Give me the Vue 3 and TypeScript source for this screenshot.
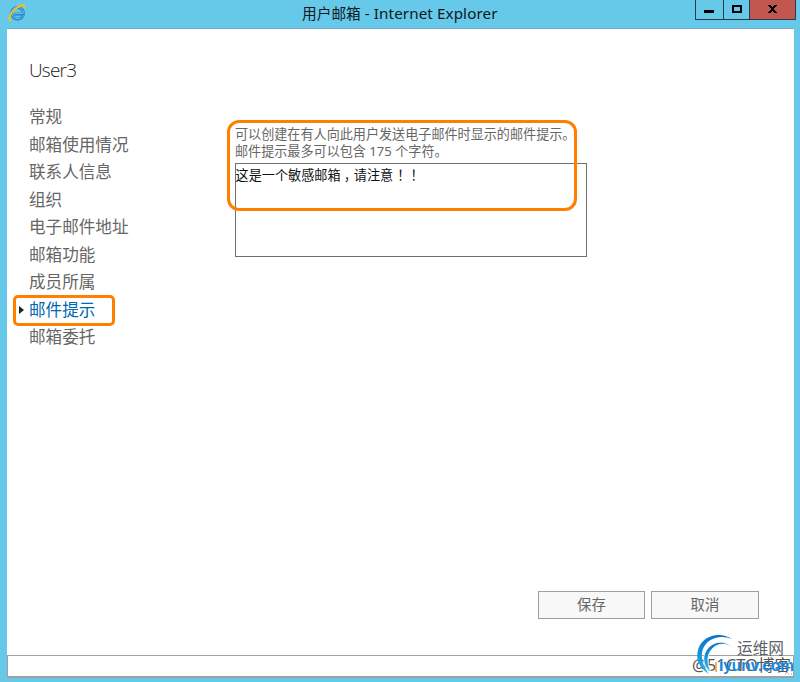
<script setup lang="ts">
interface Section {
  label: string
  active?: boolean
}

const sections: Section[] = [
  { label: '常规' },
  { label: '邮箱使用情况' },
  { label: '联系人信息' },
  { label: '组织' },
  { label: '电子邮件地址' },
  { label: '邮箱功能' },
  { label: '成员所属' },
  { label: '邮件提示', active: true },
  { label: '邮箱委托' },
]
</script>

<template>
  <div class="window">
    <header class="titlebar">
      <svg class="ie" viewBox="0 0 18 18" width="18" height="18">
        <path d="M14.6 12.1A5.8 5.8 0 1 1 15.3 8.7V10H5.9" fill="none" stroke="#2385cc" stroke-width="3" />
        <path d="M14.3 12A5.8 5.8 0 1 1 15.2 9.4H6" fill="none" stroke="#72c4ef" stroke-width="1" />
        <path d="M3.2 16.3C-.8 17.4 1.5 10 7 5.2C11.9.8 17.8-.5 15.9 4.2" fill="none" stroke="#efc21a" stroke-width="2" />
      </svg>
      <h1 class="title">用户邮箱<span class="app"> - Internet Explorer</span></h1>
      <div class="controls">
        <span class="control"><i class="minimize"></i></span>
        <span class="control"><i class="maximize"></i></span>
        <span class="control close">
          <svg viewBox="0 0 9 8" width="9" height="8" shape-rendering="crispEdges">
            <path d="M0 0h3v1h1v1h1V1h1V0h3v1H8v1H7v1H6v2h1v1h1v1h1v1H6V7H5V6H4v1H3v1H0V7h1V6h1V5h1V3H2V2H1V1H0z" />
          </svg>
        </span>
      </div>
    </header>
    <main class="page">
      <h2 class="user">User3</h2>
      <div class="content">
        <nav class="nav">
          <a v-for="section in sections" :key="section.label" class="item" :class="{ active: section.active }">
            {{ section.label }}
          </a>
        </nav>
        <section class="tip">
          <p class="hint">可以创建在有人向此用户发送电子邮件时显示的邮件提示。<br />邮件提示最多可以包含 175 个字符。</p>
          <div class="field">这是一个敏感邮箱<span class="comma">，</span>请注意<span class="bang">！！</span></div>
          <div class="outline"></div>
        </section>
      </div>
      <footer class="actions">
        <button class="button save">保存</button>
        <button class="button">取消</button>
      </footer>
    </main>
    <div class="statusbar"></div>
    <svg class="watermark" viewBox="690 630 110 52" width="110" height="52">
      <defs>
        <linearGradient id="arc" x1="0" y1="0" x2="0" y2="1">
          <stop offset="0" stop-color="#0872c7" />
          <stop offset="1" stop-color="#20b5f1" />
        </linearGradient>
      </defs>
      <text class="blog" x="692" y="671" textLength="99" lengthAdjust="spacingAndGlyphs">@51CTO博客</text>
      <path d="M732 639C720 631 702 635 698 650C695 661 701 669 709 674C700 662 699 649 709 641C716 636 725 636 732 639Z" fill="url(#arc)" />
      <path d="M733 648C723 637 707 643 704 656C703 663 706 669 711 672C706 662 707 653 714 647C720 643 727 643 733 648Z" fill="url(#arc)" stroke="#fff" stroke-width=".8" />
      <text class="brand" x="737" y="654" textLength="47" lengthAdjust="spacingAndGlyphs">运维网</text>
      <path d="M716 662v10M742 665v6" stroke="#f39a2d" stroke-width="1.5" />
      <text class="domain" x="719" y="671" textLength="75" lengthAdjust="spacingAndGlyphs">iyunv.com</text>
      <path d="M791 671h1M788 674h1M791 674h1M785 674h1" stroke="#999" stroke-width="1" />
    </svg>
  </div>
</template>

<style>
body {
  margin: 0;
  overflow: hidden;
}
</style>

<style scoped>
.window {
  position: relative;
  box-sizing: border-box;
  width: 800px;
  height: 682px;
  padding: 0 6px 4px 7px;
  display: flex;
  flex-direction: column;
  background: #66c9ea;
  font-family: "Noto Sans", "Noto Sans CJK SC", sans-serif;
}
.titlebar {
  box-sizing: border-box;
  height: 29px;
  display: flex;
  align-items: flex-start;
  border-bottom: 1px solid #7ba9c8;
}
.ie { margin: 4px 0 0 1px; }
.title {
  flex: 1;
  margin: 3px 0 0 -1px;
  padding-left: 277px;
  font-size: 14.7px;
  font-weight: 400;
  line-height: 21px;
  color: #101820;
  white-space: nowrap;
}
.app { font-size: 15.2px; letter-spacing: 0.1px; }
.controls {
  box-sizing: border-box;
  width: 101px;
  height: 20px;
  margin-right: -2px;
  display: flex;
  border: 1px solid #263e48;
  border-top: 0;
}
.control {
  box-sizing: border-box;
  width: 28px;
  display: flex;
  padding-left: 8px;
  border-right: 1px solid #263e48;
}
.control + .control { width: 26px; }
.control.close {
  flex: 1;
  width: auto;
  padding-left: 18px;
  border: 0;
  background: #c1574f;
}
.minimize { width: 10px; height: 3px; margin-top: 10px; background: #000; }
.maximize { box-sizing: border-box; width: 10px; height: 8px; margin-top: 5px; border: 2px solid #000; }
.close svg { margin-top: 5px; }
.page {
  flex: 1;
  display: flex;
  flex-direction: column;
  background: #fff;
}
.user {
  margin: 28px 0 0 22px;
  font: 300 19px/27px "Open Sans", "Noto Sans", sans-serif;
  letter-spacing: -0.8px;
  color: #222;
}
.content { display: flex; margin-top: 19px; }
.nav { width: 206px; margin-left: 22px; display: flex; flex-direction: column; }
.item {
  position: relative;
  font-size: 16.6px;
  line-height: 27.5px;
  height: 27.5px;
  color: #666;
}
.item.active { color: #0066b3; }
.item.active::before {
  content: "";
  position: absolute;
  left: -10px;
  top: 10px;
  border-left: 5px solid #222;
  border-top: 4px solid transparent;
  border-bottom: 4px solid transparent;
}
.item.active::after {
  content: "";
  position: absolute;
  left: -16px;
  top: -1px;
  width: 96px;
  height: 25px;
  border: 3px solid #ff8000;
  border-radius: 5px;
}
.tip { position: relative; width: 352px; margin-top: 22px; }
.hint {
  margin: 0;
  padding-top: 1px;
  font-size: 13.1px;
  line-height: 17px;
  color: #666;
  white-space: nowrap;
}
.field {
  box-sizing: border-box;
  height: 94px;
  margin-top: 3px;
  padding-top: 1px;
  border: 1px solid #707070;
  font-size: 13.15px;
  line-height: 20px;
  text-indent: -0.5px;
  color: #111;
}
.comma { position: relative; left: 3px; }
.bang { position: relative; left: 4px; }
.outline {
  position: absolute;
  box-sizing: border-box;
  left: -8px;
  top: -5px;
  width: 350px;
  height: 91px;
  border: 3px solid #ff8000;
  border-radius: 12px;
}
.actions {
  display: flex;
  justify-content: flex-end;
  gap: 6px;
  margin: auto 35px 36px 0;
}
.button {
  box-sizing: border-box;
  width: 108px;
  height: 28px;
  padding: 0 0 1px;
  border: 1px solid #97a1a6;
  background: #f8f8f8;
  font: 14.4px/25px "Noto Sans", "Noto Sans CJK SC", sans-serif;
  color: #666;
}
.save { width: 107px; }
.statusbar {
  box-sizing: border-box;
  height: 23px;
  border: 1px solid #a0a0a0;
  border-bottom-width: 2px;
  background: #fff;
}
.watermark { position: absolute; right: 0; bottom: 0; }
.blog {
  font: 16px "Noto Sans", "Noto Sans CJK SC", sans-serif;
  fill: #555;
  stroke: #fff;
  stroke-width: 1.5px;
  paint-order: stroke;
}
.brand { font: 16px "Noto Sans CJK SC", sans-serif; fill: #5b6268; }
.domain { font: bold 16px "Liberation Sans", sans-serif; fill: #1688e5; }
</style>
